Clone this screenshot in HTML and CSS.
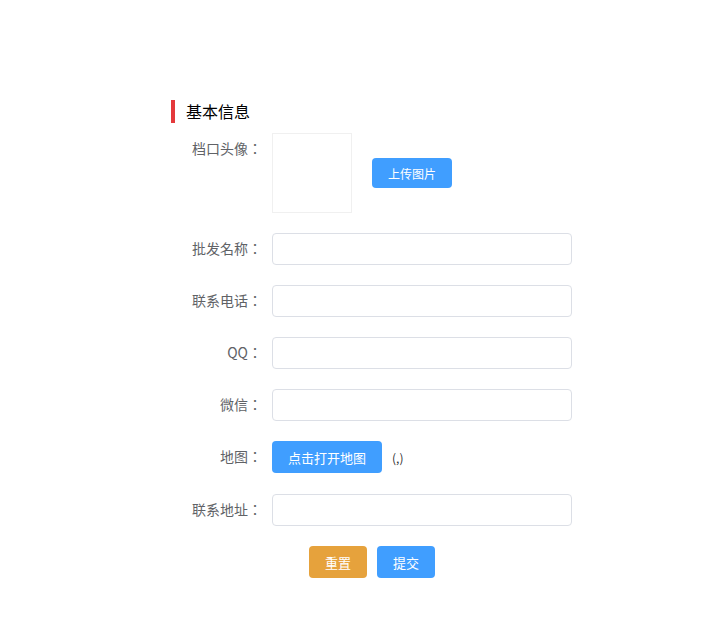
FILE: index.html
```html
<!DOCTYPE html>
<html lang="zh-CN">
<head>
<meta charset="utf-8">
<title>基本信息</title>
<link rel="stylesheet" href="styles.css">
</head>
<body>
<div class="page">
  <h2 class="title">基本信息</h2>
  <form class="form">
    <div class="row row-avatar">
      <label class="label" lang="zh-TW">档口头像：</label>
      <div class="field field-avatar">
        <div class="avatar"></div>
        <button type="button" class="btn btn-primary btn-upload">上传图片</button>
      </div>
    </div>
    <div class="row">
      <label class="label" lang="zh-TW">批发名称：</label>
      <div class="field"><input class="input" type="text"></div>
    </div>
    <div class="row">
      <label class="label" lang="zh-TW">联系电话：</label>
      <div class="field"><input class="input" type="text"></div>
    </div>
    <div class="row">
      <label class="label" lang="zh-TW">QQ：</label>
      <div class="field"><input class="input" type="text"></div>
    </div>
    <div class="row">
      <label class="label" lang="zh-TW">微信：</label>
      <div class="field"><input class="input" type="text"></div>
    </div>
    <div class="row row-map">
      <label class="label" lang="zh-TW">地图：</label>
      <div class="field field-map">
        <button type="button" class="btn btn-primary btn-map">点击打开地图</button>
        <span class="coords">(,)</span>
      </div>
    </div>
    <div class="row">
      <label class="label" lang="zh-TW">联系地址：</label>
      <div class="field"><input class="input" type="text"></div>
    </div>
    <div class="actions">
      <button type="reset" class="btn btn-warning btn-action">重置</button>
      <button type="button" class="btn btn-primary btn-action">提交</button>
    </div>
  </form>
</div>
</body>
</html>
```
FILE: styles.css
```css
* { box-sizing: border-box; }
html, body {
  margin: 0;
  padding: 0;
  background: #fff;
}
body {
  font-family: "Noto Sans CJK SC", "Noto Sans", "Liberation Sans", sans-serif;
  color: #303133;
}
.page {
  padding: 100px 0 0 172px;
  width: 572px;
}
.title {
  margin: 0 0 10px -1px;
  height: 23px;
  line-height: 23px;
  border-left: 4px solid #e4393c;
  padding-left: 11px;
  font-size: 16px;
  font-weight: normal;
  color: #000;
}
.form {
  width: 400px;
}
.row {
  display: flex;
  align-items: flex-start;
  margin-bottom: 20px;
}
.label {
  width: 100px;
  flex: 0 0 100px;
  padding-right: 10px;
  text-align: right;
  font-family: "Noto Sans CJK TC", "Noto Sans CJK SC", sans-serif;
  font-size: 14px;
  line-height: 30px;
  color: #606266;
}
.field {
  flex: 1;
  display: flex;
  align-items: center;
}
.avatar {
  width: 80px;
  height: 80px;
  border: 1px solid #f0f0f0;
}
.btn {
  border: none;
  border-radius: 4px;
  color: #fff;
  font-family: inherit;
  cursor: pointer;
  padding: 0;
}
.btn-primary { background: #409eff; }
.btn-warning { background: #e6a23c; }
.btn-upload {
  margin-left: 20px;
  width: 80px;
  height: 30px;
  font-size: 12px;
}
.row-map { margin-bottom: 21px; }
.btn-map {
  width: 110px;
  height: 32px;
  font-size: 13px;
}
.coords {
  margin-left: 10px;
  font-size: 12px;
  color: #303133;
}
.input {
  width: 300px;
  height: 32px;
  border: 1px solid #dcdfe6;
  border-radius: 4px;
  padding: 0 12px;
  font-size: 14px;
  outline: none;
}
.actions {
  display: flex;
  justify-content: center;
  gap: 10px;
}
.btn-action {
  width: 58px;
  height: 32px;
  font-size: 13px;
}
```
